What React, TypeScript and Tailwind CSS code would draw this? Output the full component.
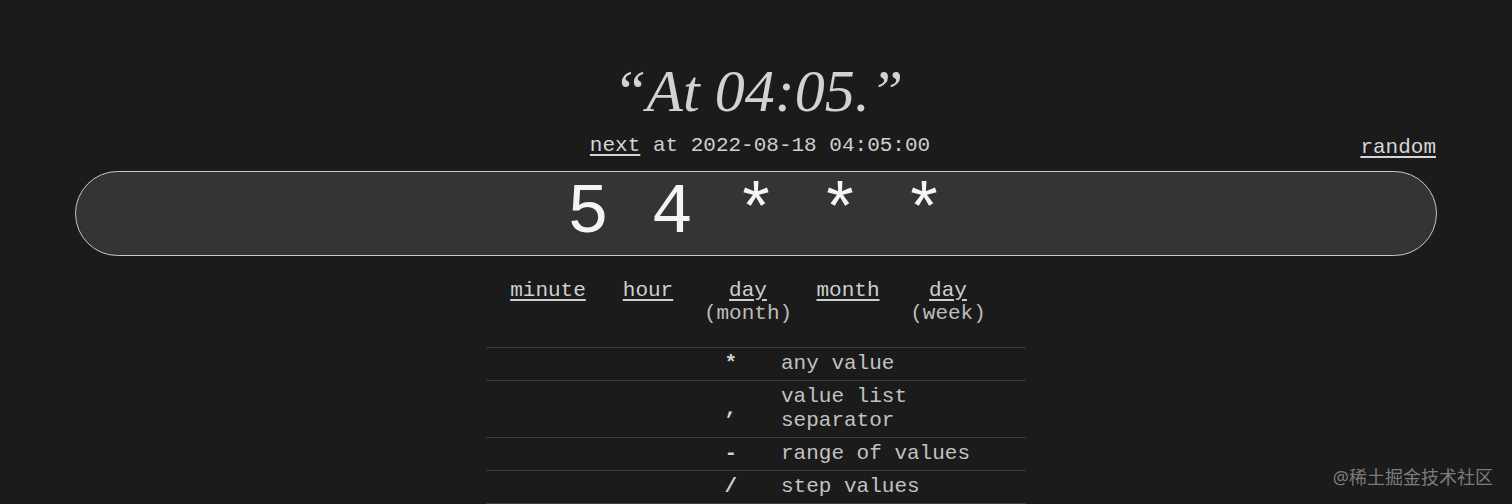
const parts = [
  { label: "minute" },
  { label: "hour" },
  { label: "day", sub: "(month)" },
  { label: "month" },
  { label: "day", sub: "(week)" },
];

const legend = [
  { symbol: "*", text: "any value" },
  { symbol: ",", text: "value list separator" },
  { symbol: "-", text: "range of values" },
  { symbol: "/", text: "step values" },
];

export default function App() {
  return (
    <div className="relative min-h-screen bg-[#1b1b1b] text-[#cfcfcf] font-['Liberation_Mono',monospace] overflow-hidden">
      <div className="w-[1362px] mx-auto pt-[61px]">
        <h1 className="text-center font-['Liberation_Serif',serif] italic text-[60px] leading-[60px] text-[#d2d2d2] pl-[4px]">
          “At 04:05.”
        </h1>

        <div className="grid grid-cols-[1fr_auto_1fr] mt-[13px] text-[21px] leading-[24px]">
          <div />
          <div className="pl-[8px]">
            <a href="#" className="underline underline-offset-[3px] text-[#d6d6d6]">
              next
            </a>{" "}
            at 2022-08-18 04:05:00
          </div>
          <div className="justify-self-end pt-[2px] pr-[1px]">
            <a href="#" className="underline underline-offset-[3px] text-[#d6d6d6]">
              random
            </a>
          </div>
        </div>

        <input
          readOnly
          value="5 4 * * *"
          className="block w-full h-[85px] mt-[11px] rounded-full border border-[#c8c8c8] bg-[#343434] text-center text-[#f4f4f4] text-[70px] font-['Liberation_Mono',monospace] outline-none"
        />

        <div className="flex justify-center mt-[23px] mr-[16px] text-[21px] leading-[23px]">
          {parts.map((p, i) => (
            <div key={i} className="w-[100px] flex flex-col items-center">
              <a href="#" className="underline underline-offset-[3px] text-[#cfcfcf]">
                {p.label}
              </a>
              {p.sub && <span className="text-[#bdbdbd]">{p.sub}</span>}
            </div>
          ))}
        </div>

        <div className="w-[540px] mx-auto mt-[22px] border-b border-[#3c3c3c] text-[21px] leading-[24px]">
          {legend.map((row, i) => (
            <div key={i} className="grid grid-cols-[295px_1fr] items-center border-t border-[#3c3c3c] py-[4px]">
              <div className="text-right pr-[44px] font-bold text-[#d0d0d0]">{row.symbol}</div>
              <div className="text-[#c2c2c2]">{row.text}</div>
            </div>
          ))}
        </div>
      </div>

      <div className="absolute right-[19px] bottom-[15px] text-[18px] leading-[24px] text-[#7c7c7c] font-['Noto_Sans','Noto_Sans_CJK_SC',sans-serif]">
        @稀土掘金技术社区
      </div>
    </div>
  );
}
